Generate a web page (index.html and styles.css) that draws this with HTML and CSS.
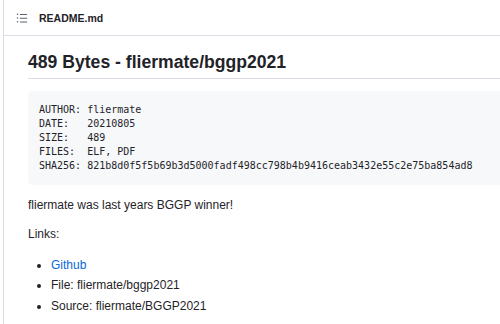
FILE: index.html
```html
<!DOCTYPE html>
<html>
<head>
<meta charset="utf-8">
<link rel="stylesheet" href="styles.css">
</head>
<body>
<div class="readme">
  <div class="readme-header">
    <svg class="icon" viewBox="0 0 16 16" width="12" height="12"><path d="M5.75 2.5h8.5a.75.75 0 0 1 0 1.5h-8.5a.75.75 0 0 1 0-1.5Zm0 5h8.5a.75.75 0 0 1 0 1.5h-8.5a.75.75 0 0 1 0-1.5Zm0 5h8.5a.75.75 0 0 1 0 1.5h-8.5a.75.75 0 0 1 0-1.5ZM2 14a1 1 0 1 1 0-2 1 1 0 0 1 0 2Zm1-6a1 1 0 1 1-2 0 1 1 0 0 1 2 0ZM2 4a1 1 0 1 1 0-2 1 1 0 0 1 0 2Z"/></svg>
    <span class="filename">README.md</span>
  </div>
  <article class="markdown">
    <h1>489 Bytes - fliermate/bggp2021</h1>
    <pre class="code">AUTHOR: fliermate
DATE:   20210805
SIZE:   489
FILES:  ELF, PDF
SHA256: 821b8d0f5f5b69b3d5000fadf498cc798b4b9416ceab3432e55c2e75ba854ad8</pre>
    <p>fliermate was last years BGGP winner!</p>
    <p>Links:</p>
    <ul>
      <li><a href="#">Github</a></li>
      <li>File: fliermate/bggp2021</li>
      <li>Source: fliermate/BGGP2021</li>
    </ul>
  </article>
</div>
</body>
</html>
```

FILE: styles.css
```css
html, body {
  margin: 0;
  padding: 0;
  background: #ffffff;
  overflow: hidden;
}

body {
  font-family: "Liberation Sans", Arial, sans-serif;
  color: #1f2328;
}

.readme {
  margin-left: 3px;
  width: 540px;
  border-left: 1px solid #d8dee4;
  min-height: 324px;
}

.readme-header {
  height: 35px;
  border-bottom: 1px solid #d8dee4;
  display: flex;
  align-items: center;
  padding-left: 12px;
  gap: 11px;
}

.icon {
  fill: #59636e;
  flex: none;
}

.filename {
  font-weight: bold;
  font-size: 10.5px;
  color: #1f2328;
}

.markdown {
  padding: 0 0 0 24px;
  font-size: 12px;
  line-height: 17px;
}

.markdown h1 {
  margin: 15px 0 0;
  font-size: 17.6px;
  line-height: 22.5px;
  font-weight: bold;
  padding-bottom: 4px;
  border-bottom: 1px solid #d8dee4;
  color: #1f2328;
}

.code {
  margin: 12px 0 0;
  padding: 12px 11px;
  background: #f6f8fa;
  border-radius: 5px;
  font-family: "DejaVu Sans Mono", monospace;
  font-size: 10px;
  line-height: 14px;
  color: #1f2328;
}

.markdown p {
  margin: 12px 0 0;
}

.markdown ul {
  margin: 14px 0 0;
  padding-left: 23px;
}

.markdown li + li {
  margin-top: 3.5px;
}

.markdown a {
  color: #0969da;
  text-decoration: none;
}
```
